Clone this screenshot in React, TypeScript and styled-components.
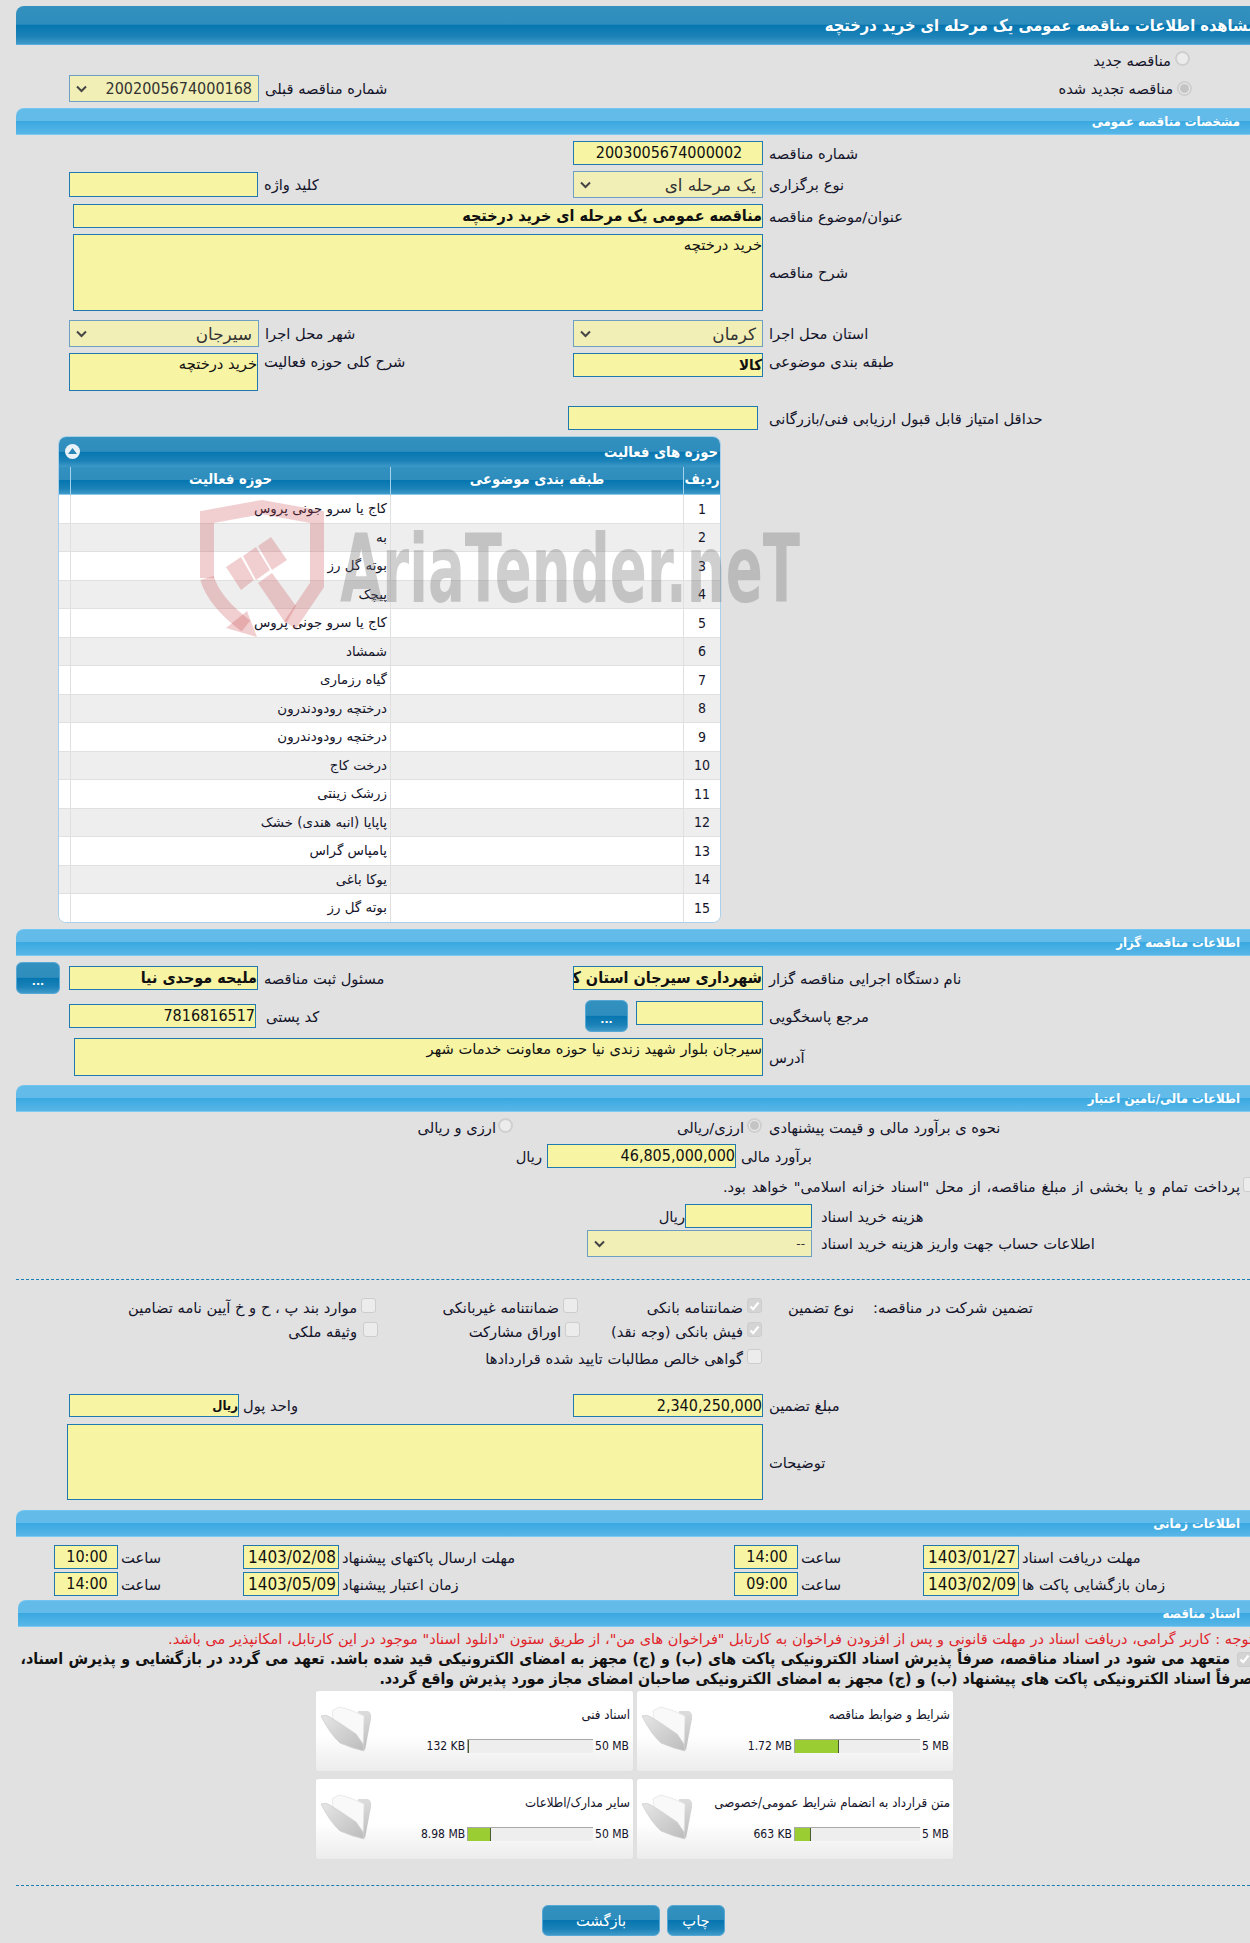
import React from 'react';
import styled, { createGlobalStyle } from 'styled-components';

const FONT = '"DejaVu Sans", sans-serif';
const NARROW = '"DejaVu Sans Condensed", "DejaVu Sans", sans-serif';
const BLUE_GRADIENT = 'linear-gradient(#3391c0 0, #2f8dbd 48%, #0676b0 50%, #1c82b8 80%, #3f9ac9 100%)';

const GlobalStyle = createGlobalStyle`
  html, body {
    margin: 0;
    background: #e1e1e1;
    font-family: ${FONT};
    font-size: 14.7px;
    color: #14142a;
  }
`;

const Page = styled.div`
  position: relative;
  width: 1234px;
  height: 1943px;
  padding-left: 16px;
  overflow: hidden;
`;

const MainTitle = styled.div`
  display: flex;
  justify-content: flex-start;
  align-items: center;
  height: 39px;
  margin-top: 6px;
  border-radius: 8px 0 0 0;
  background: ${BLUE_GRADIENT};
  box-sizing: border-box;
  border-bottom: 1px solid #56aede;
  color: #fff;
  font-family: ${NARROW};
  font-weight: bold;
  font-size: 16.3px;
  direction: rtl;
  white-space: nowrap;
  overflow: hidden;
`;

const TitleText = styled.span`
  margin-right: -7px;
`;

const Bar = styled.div<{ $top: number; $left?: number }>`
  display: flex;
  align-items: center;
  justify-content: flex-start;
  height: 27px;
  box-sizing: border-box;
  margin-top: ${(p) => p.$top}px;
  margin-left: ${(p) => p.$left || 0}px;
  padding: 0 10px 0 0;
  border-radius: 8px 0 0 0;
  border-top: 1px solid #72c5f0;
  border-bottom: 1px solid #7ccbf3;
  background: linear-gradient(#63bbe9 0, #63bbe9 48%, #3aa9e1 50%, #58b6e7 100%);
  color: #fff;
  font-family: ${NARROW};
  font-weight: bold;
  font-size: 13px;
  direction: rtl;
`;

const Row = styled.div<{ $top: number; $cols?: string; $pad?: number; $h?: number }>`
  display: grid;
  grid-template-columns: ${(p) => p.$cols || '504px 1fr'};
  padding-left: ${(p) => (p.$pad === undefined ? 53 : p.$pad)}px;
  margin-top: ${(p) => p.$top}px;
  ${(p) => (p.$h ? `height: ${p.$h}px;` : '')}
`;

const Group = styled.div<{ $end?: boolean; $gap?: number; $start?: boolean }>`
  display: flex;
  align-items: ${(p) => (p.$start ? 'flex-start' : 'center')};
  justify-content: ${(p) => (p.$end ? 'flex-end' : 'flex-start')};
  gap: ${(p) => (p.$gap === undefined ? 6 : p.$gap)}px;
`;

const Label = styled.span`
  direction: rtl;
  white-space: nowrap;
`;

// radio and checkbox captions sit a little lower than the box beside them
const BoxLabel = styled(Label)`
  margin-top: 4px;
`;

const TreasuryLabel = styled(BoxLabel)`
  word-spacing: 1.2px;
`;

const Control = styled.div<{ $w: number; $h?: number; $digits?: number; $bold?: boolean }>`
  flex: none;
  box-sizing: border-box;
  width: ${(p) => p.$w}px;
  height: ${(p) => p.$h || 24}px;
  line-height: ${(p) => (p.$h && p.$h > 30 ? '20px' : `${(p.$h || 24) - 2}px`)};
  padding: 0 0 0 2px;
  background: #f7f4a4;
  border: 1px solid #1f78ae;
  direction: rtl;
  text-align: right;
  white-space: nowrap;
  overflow: hidden;
  font-family: ${(p) => (p.$digits || p.$bold ? NARROW : FONT)};
  font-size: ${(p) => p.$digits || (p.$bold ? 16 : 14.7)}px;
  font-weight: ${(p) => (p.$bold ? 'bold' : 'normal')};
  color: #111;
`;

const Centered = styled.div`
  text-align: center;
  direction: ltr;
`;

const SelectBox = styled.div<{ $w: number }>`
  flex: none;
  display: flex;
  align-items: center;
  justify-content: space-between;
  box-sizing: border-box;
  width: ${(p) => p.$w}px;
  height: 27px;
  padding: 0 6px;
  background: #f1efb6;
  border: 1px solid #6c9fc2;
  color: #333;
  direction: ltr;
`;

const SelectText = styled.span<{ $digits?: boolean; $small?: boolean }>`
  direction: rtl;
  font-family: ${(p) => (p.$digits ? NARROW : FONT)};
  font-size: ${(p) => (p.$digits ? 16 : p.$small ? 12 : 16.8)}px;
`;

const Chevron = () => (
  <svg width="11" height="8" viewBox="0 0 11 8" fill="none">
    <path d="M1 1.5 L5.5 6 L10 1.5" stroke="#444" strokeWidth="2" />
  </svg>
);

function Select({ w, text, digits, small }: { w: number; text: string; digits?: boolean; small?: boolean }) {
  return (
    <SelectBox $w={w}>
      <Chevron />
      <SelectText $digits={digits} $small={small}>{text}</SelectText>
    </SelectBox>
  );
}

const Radio = styled.span<{ $on?: boolean }>`
  flex: none;
  display: inline-flex;
  align-items: center;
  justify-content: center;
  box-sizing: border-box;
  width: 15px;
  height: 15px;
  border-radius: 50%;
  background: #ececec;
  border: 2px solid #cfcfcf;
  &::after {
    content: '';
    width: 9px;
    height: 9px;
    border-radius: 50%;
    background: ${(p) => (p.$on ? '#c4c4c4' : 'transparent')};
  }
`;

const CheckBoxBase = styled.span<{ $on?: boolean }>`
  flex: none;
  display: inline-flex;
  align-items: center;
  justify-content: center;
  box-sizing: border-box;
  width: 15px;
  height: 15px;
  border-radius: 3px;
  background: ${(p) => (p.$on ? '#d4d4d4' : '#ececec')};
  border: 1px solid #cdcdcd;
`;

function CheckBox({ on }: { on?: boolean }) {
  return (
    <CheckBoxBase $on={on}>
      {on && (
        <svg width="11" height="10" viewBox="0 0 11 10" fill="none">
          <path d="M1.5 5.5 L4.2 8.2 L9.5 1.5" stroke="#fff" strokeWidth="2.2" />
        </svg>
      )}
    </CheckBoxBase>
  );
}

const RadioLine = styled.div<{ $top: number }>`
  display: flex;
  justify-content: flex-end;
  align-items: center;
  gap: 4px;
  height: 15px;
  margin-top: ${(p) => p.$top}px;
  padding-right: 60px;
`;

const DotsButton = styled.div<{ $wide?: number }>`
  flex: none;
  display: flex;
  align-items: flex-end;
  justify-content: center;
  box-sizing: border-box;
  width: ${(p) => p.$wide || 44}px;
  height: 32px;
  padding-bottom: 6px;
  border-radius: 6px;
  border: 1px solid #55a8d6;
  background: ${BLUE_GRADIENT};
  color: #fff;
  font-weight: bold;
  font-size: 11px;
  line-height: 11px;
`;

const ShiftedDots = styled(DotsButton)`
  margin: 0 2px 0 12px;
`;

const RaisedControl = styled(Control)`
  margin-top: -7px;
`;

const Panel = styled.div`
  width: 663px;
  height: 487px;
  margin: 6px 0 0 42px;
  box-sizing: border-box;
  border-radius: 8px;
  overflow: hidden;
  background: #fff;
  border: 1px solid #a9d0ea;
`;

const PanelHead = styled.div`
  display: flex;
  align-items: center;
  justify-content: space-between;
  box-sizing: border-box;
  height: 30px;
  padding: 0 2px 2px 6px;
  background: ${BLUE_GRADIENT};
  color: #fff;
  font-family: ${NARROW};
  font-weight: bold;
  font-size: 14.7px;
`;

const Collapse = styled.span`
  flex: none;
  display: flex;
  align-items: center;
  justify-content: center;
  width: 15px;
  height: 15px;
  border-radius: 50%;
  background: #e8f2f8;
`;

const ColumnGrid = styled.div`
  display: grid;
  grid-template-columns: 12px 320px 293px 1fr;
`;

const HeadRow = styled(ColumnGrid)`
  height: 28px;
  background: ${BLUE_GRADIENT};
  border-bottom: 1px solid #8ccaec;
  box-sizing: border-box;
  color: #fff;
  font-family: ${NARROW};
  font-weight: bold;
  font-size: 14.7px;
`;

const HeadCell = styled.div`
  display: flex;
  align-items: center;
  justify-content: center;
  padding-bottom: 4px;
  border-right: 1px solid #a5d3ee;
  direction: rtl;
  &:last-child {
    border-right: 0;
  }
`;

const DataRow = styled(ColumnGrid)<{ $odd: boolean }>`
  height: 28.5px;
  box-sizing: border-box;
  background: ${(p) => (p.$odd ? '#eeeeee' : '#ffffff')};
  border-bottom: 1px solid #e0e0e0;
  font-size: 13.4px;
`;

const DataCell = styled.div`
  display: flex;
  align-items: center;
  justify-content: flex-end;
  padding-right: 3px;
  direction: ltr;
  border-right: 1px solid #e0e0e0;
  white-space: nowrap;
`;

const NumCell = styled.div`
  display: flex;
  align-items: center;
  justify-content: center;
  font-family: ${NARROW};
  font-size: 14px;
`;

const Watermark = styled.svg`
  position: absolute;
  left: 190px;
  top: 495px;
  pointer-events: none;
`;

const Dashed = styled.div<{ $top: number }>`
  margin-top: ${(p) => p.$top}px;
  border-top: 1px dashed #1a7fb5;
`;

const Notice = styled.div`
  margin: 3px -3px 0 0;
  height: 19px;
  line-height: 18px;
  direction: rtl;
  white-space: nowrap;
  color: #e0242a;
  font-size: 14.5px;
`;

const Pledge = styled.div`
  direction: rtl;
  white-space: nowrap;
  font-family: ${NARROW};
  font-weight: bold;
  font-size: 15.8px;
  color: #111;
  line-height: 20px;
`;

const PledgeLine = styled.div<{ $right?: number; $spread?: number }>`
  display: flex;
  align-items: center;
  gap: 7px;
  margin-right: ${(p) => p.$right || 0}px;
  word-spacing: ${(p) => p.$spread || 0}px;
`;

const Cards = styled.div`
  display: grid;
  grid-template-columns: 317px 316px;
  grid-auto-rows: 80px;
  gap: 8px 4px;
  margin: 2px 0 0 300px;
`;

const Card = styled.div`
  display: flex;
  align-items: flex-start;
  box-sizing: border-box;
  padding: 15px 4px 0 4px;
  border-radius: 2px;
  background: linear-gradient(#ffffff 0, #ffffff 55%, #ececec 100%);
  box-shadow: 0 0 1px #cfcfcf;
`;

const CardBody = styled.div`
  flex: 1;
  display: flex;
  flex-direction: column;
`;

const CardTitle = styled.div`
  direction: rtl;
  white-space: nowrap;
  height: 14px;
  line-height: 14px;
  font-family: ${NARROW};
  font-size: 13.2px;
  margin: 2px -1px 17px 0;
`;

const Meter = styled.div`
  display: flex;
  align-items: center;
  justify-content: flex-end;
  gap: 2px;
  font-family: ${NARROW};
  font-size: 12px;
`;

const Track = styled.div`
  flex: none;
  width: 126px;
  height: 14px;
  box-sizing: border-box;
  background: #eeeeee;
  border-top: 1px solid #a8a8a8;
  border-left: 1px solid #a8a8a8;
`;

const Fill = styled.div`
  height: 100%;
  box-sizing: border-box;
  background: #9acd32;
  border-right: 1px solid #4a5a30;
`;

const Buttons = styled.div`
  display: flex;
  gap: 7px;
  margin: 19px 0 0 526px;
`;

const ActionButton = styled.div<{ $w: number }>`
  display: flex;
  align-items: center;
  justify-content: center;
  box-sizing: border-box;
  width: ${(p) => p.$w}px;
  height: 31px;
  border-radius: 6px;
  border: 1px solid #55a8d6;
  background: ${BLUE_GRADIENT};
  color: #fff;
  font-size: 14.7px;
  direction: rtl;
`;

const FolderIcon = styled.svg`
  flex: none;
`;

const Folder = ({ id }: { id: string }) => (
  <FolderIcon width="52" height="47" viewBox="0 0 52 47">
    <defs>
      <linearGradient id={`front-${id}`} x1="0" y1="0" x2="1" y2="1">
        <stop offset="0" stopColor="#e6e6e6" />
        <stop offset="1" stopColor="#bcbcbc" />
      </linearGradient>
      <linearGradient id={`back-${id}`} x1="0" y1="0" x2="0" y2="1">
        <stop offset="0" stopColor="#dcdcdc" />
        <stop offset="1" stopColor="#bdbdbd" />
      </linearGradient>
    </defs>
    <path d="M38 5 L48 5 Q52 7 51 13 L45 44 L40 40 Z" fill={`url(#back-${id})`} />
    <path d="M12 5 L19 1 Q30 3 44 10 L43 40 L36 29 L14 18 Z" fill="#f9f9f9" stroke="#e4e4e4" strokeWidth="0.8" />
    <path
      d="M1 10 Q6 8 10 11 L21 18 L36 28 L43 38 L44 45 L33 42 L20 37 Q10 28 1 10 Z"
      fill={`url(#front-${id})`}
      stroke="#cfcfcf"
      strokeWidth="0.8"
    />
  </FolderIcon>
);

const ACTIVITIES = [
  'کاج یا سرو جونی پروس',
  'به',
  'بوته گل رز',
  'پیچک',
  'کاج یا سرو جونی پروس',
  'شمشاد',
  'گیاه رزماری',
  'درختچه رودودندرون',
  'درختچه رودودندرون',
  'درخت کاج',
  'زرشک زینتی',
  'پاپایا (انبه هندی) خشک',
  'پامپاس گراس',
  'یوکا باغی',
  'بوته گل رز',
];

const DOCS = [
  { title: 'اسناد فنی', size: '132 KB', max: '50 MB', pct: 1 },
  { title: 'شرایط و ضوابط مناقصه', size: '1.72 MB', max: '5 MB', pct: 35 },
  { title: 'سایر مدارک/اطلاعات', size: '8.98 MB', max: '50 MB', pct: 18 },
  { title: 'متن قرارداد به انضمام شرایط عمومی/خصوصی', size: '663 KB', max: '5 MB', pct: 13 },
];

function App() {
  return (
    <Page>
      <GlobalStyle />
      <MainTitle>
        <TitleText>مشاهده اطلاعات مناقصه عمومی یک مرحله ای خرید درختچه</TitleText>
      </MainTitle>

      <RadioLine $top={6}>
        <BoxLabel>مناقصه جدید</BoxLabel>
        <Radio />
      </RadioLine>
      <Row $top={9} $cols="1fr auto" $h={27}>
        <Group>
          <Select w={190} text="2002005674000168" digits />
          <Label>شماره مناقصه قبلی</Label>
        </Group>
        <Group $gap={4}>
          <Label>مناقصه تجدید شده</Label>
          <Radio $on />
          <span style={{ width: 54 }} />
        </Group>
      </Row>

      <Bar $top={6}>مشخصات مناقصه عمومی</Bar>

      <Row $top={6}>
        <span />
        <Group>
          <Control $w={190} $digits={16}>
            <Centered>2003005674000002</Centered>
          </Control>
          <Label>شماره مناقصه</Label>
        </Group>
      </Row>
      <Row $top={6} $h={27}>
        <Group>
          <Control $w={189} $h={25} />
          <Label>کلید واژه</Label>
        </Group>
        <Group>
          <Select w={190} text="یک مرحله ای" />
          <Label>نوع برگزاری</Label>
        </Group>
      </Row>
      <Row $top={6} $pad={57} $cols="1fr">
        <Group>
          <Control $w={690} $bold>مناقصه عمومی یک مرحله ای خرید درختچه</Control>
          <Label>عنوان/موضوع مناقصه</Label>
        </Group>
      </Row>
      <Row $top={6} $pad={57} $cols="1fr">
        <Group>
          <Control $w={690} $h={77}>خرید درختچه</Control>
          <Label>شرح مناقصه</Label>
        </Group>
      </Row>
      <Row $top={9}>
        <Group>
          <Select w={190} text="سیرجان" />
          <Label>شهر محل اجرا</Label>
        </Group>
        <Group>
          <Select w={190} text="کرمان" />
          <Label>استان محل اجرا</Label>
        </Group>
      </Row>
      <Row $top={6} $h={38}>
        <Group $start>
          <Control $w={189} $h={38}>خرید درختچه</Control>
          <Label>شرح کلی حوزه فعالیت</Label>
        </Group>
        <Group $start>
          <Control $w={190} $digits={15} $bold>کالا</Control>
          <Label>طبقه بندی موضوعی</Label>
        </Group>
      </Row>
      <Row $top={15} $cols="499px 1fr">
        <span />
        <Group $gap={11}>
          <Control $w={190} />
          <Label>حداقل امتیاز قابل قبول ارزیابی فنی/بازرگانی</Label>
        </Group>
      </Row>

      <Panel>
        <PanelHead>
          <Collapse>
            <svg width="9" height="6" viewBox="0 0 9 6">
              <path d="M4.5 0 L9 6 L0 6 Z" fill="#2a86b8" />
            </svg>
          </Collapse>
          <Label>حوزه های فعالیت</Label>
        </PanelHead>
        <HeadRow>
          <HeadCell />
          <HeadCell>حوزه فعالیت</HeadCell>
          <HeadCell>طبقه بندی موضوعی</HeadCell>
          <HeadCell>ردیف</HeadCell>
        </HeadRow>
        {ACTIVITIES.map((name, i) => (
          <DataRow key={i} $odd={i % 2 === 1}>
            <DataCell />
            <DataCell>
              <Label>{name}</Label>
            </DataCell>
            <DataCell />
            <NumCell>{i + 1}</NumCell>
          </DataRow>
        ))}
      </Panel>

      <Watermark width="620" height="150" viewBox="190 495 620 150">
        <g fill="none" stroke="#c8474a" strokeOpacity="0.26" strokeWidth="14">
          <path d="M207 578 L207 517 L262 507 L317 517 L317 585 L290 625" />
          <path d="M207 578 Q214 602 246 626" />
        </g>
        <g fill="#c8474a" fillOpacity="0.26">
          <path d="M247 611 L257 637 L226 628 Z" />
          <path d="M226 567 L241 557 L254 580 L241 590 Z" />
          <path d="M243 556 L256 547 L270 570 L256 580 Z" />
          <path d="M258 546 L271 537 L287 560 L272 570 Z" />
          <path d="M258 583 L272 573 L296 606 L286 624 Z" />
        </g>
        <text
          x="340"
          y="602"
          fontFamily='"DejaVu Sans", sans-serif'
          fontWeight="bold"
          fontSize="94"
          textLength="460"
          lengthAdjust="spacingAndGlyphs"
          fill="#6e6e6e"
          fillOpacity="0.33"
        >
          AriaTender.neT
        </text>
      </Watermark>

      <Bar $top={6}>اطلاعات مناقصه گزار</Bar>

      <Row $top={6} $pad={0} $cols="557px 1fr" $h={32}>
        <Group $gap={9}>
          <DotsButton>...</DotsButton>
          <Group>
            <Control $w={189} $bold>ملیحه موحدی نیا</Control>
            <Label>مسئول ثبت مناقصه</Label>
          </Group>
        </Group>
        <Group>
          <Control $w={190} $bold>شهرداری سیرجان استان کرمان</Control>
          <Label>نام دستگاه اجرایی مناقصه گزار</Label>
        </Group>
      </Row>
      <Row $top={6} $h={32}>
        <Group $gap={10}>
          <Control $w={187} $digits={16}>7816816517</Control>
          <Label>کد پستی</Label>
        </Group>
        <Group>
          <ShiftedDots $wide={43}>...</ShiftedDots>
          <RaisedControl $w={127} />
          <Label>مرجع پاسخگویی</Label>
        </Group>
      </Row>
      <Row $top={6} $pad={58} $cols="1fr">
        <Group>
          <Control $w={689} $h={38}>سیرجان بلوار شهید زندی نیا حوزه معاونت خدمات شهر</Control>
          <Label>آدرس</Label>
        </Group>
      </Row>

      <Bar $top={9}>اطلاعات مالی/تامین اعتبار</Bar>

      <Row $top={3} $pad={0} $cols="497px 249px 1fr" $h={17}>
        <Group $end $gap={2}>
          <BoxLabel>ارزی و ریالی</BoxLabel>
          <Radio />
        </Group>
        <Group $end $gap={3}>
          <BoxLabel>ارزی/ریالی</BoxLabel>
          <Radio $on />
        </Group>
        <Group style={{ paddingLeft: 7 }}>
          <BoxLabel>نحوه ی برآورد مالی و قیمت پیشنهادی</BoxLabel>
        </Group>
      </Row>
      <Row $top={12} $pad={0} $cols="531px 1fr">
        <Group $end style={{ paddingRight: 5 }}>
          <Label>ریال</Label>
        </Group>
        <Group $gap={5}>
          <Control $w={189} $digits={16}>46,805,000,000</Control>
          <Label>برآورد مالی</Label>
        </Group>
      </Row>
      <Row $top={6} $pad={0} $cols="1fr" $h={15}>
        <Group $end $gap={3} style={{ marginRight: -8 }}>
          <TreasuryLabel>پرداخت تمام و یا بخشی از مبلغ مناقصه، از محل "اسناد خزانه اسلامی" خواهد بود.</TreasuryLabel>
          <CheckBox />
        </Group>
      </Row>
      <Row $top={15} $pad={0} $cols="669px 1fr">
        <Group $end>
          <Label>ریال</Label>
        </Group>
        <Group $gap={9}>
          <Control $w={127} />
          <Label>هزینه خرید اسناد</Label>
        </Group>
      </Row>
      <Row $top={2} $pad={0} $cols="571px 1fr">
        <span />
        <Group $gap={9}>
          <Select w={225} text="--" small />
          <Label>اطلاعات حساب جهت واریز هزینه خرید اسناد</Label>
        </Group>
      </Row>

      <Dashed $top={22} />

      <Row $top={15} $pad={0} $cols="360px 202px 184px 1fr" $h={15}>
        <Group $end $gap={4}>
          <BoxLabel>موارد بند پ ، ح و خ آیین نامه تضامین</BoxLabel>
          <CheckBox />
        </Group>
        <Group $end $gap={4}>
          <BoxLabel>ضمانتنامه غیربانکی</BoxLabel>
          <CheckBox />
        </Group>
        <Group $end $gap={4}>
          <BoxLabel>ضمانتنامه بانکی</BoxLabel>
          <CheckBox on />
        </Group>
        <Group $gap={19} style={{ paddingLeft: 26 }}>
          <BoxLabel>نوع تضمین</BoxLabel>
          <BoxLabel>تضمین شرکت در مناقصه:</BoxLabel>
        </Group>
      </Row>
      <Row $top={9} $pad={0} $cols="362px 202px 182px 1fr" $h={15}>
        <Group $end $gap={6}>
          <BoxLabel>وثیقه ملکی</BoxLabel>
          <CheckBox />
        </Group>
        <Group $end $gap={4}>
          <BoxLabel>اوراق مشارکت</BoxLabel>
          <CheckBox />
        </Group>
        <Group $end $gap={4}>
          <BoxLabel>فیش بانکی (وجه نقد)</BoxLabel>
          <CheckBox on />
        </Group>
      </Row>
      <Row $top={12} $pad={0} $cols="746px 1fr" $h={15}>
        <Group $end $gap={4}>
          <BoxLabel>گواهی خالص مطالبات تایید شده قراردادها</BoxLabel>
          <CheckBox />
        </Group>
      </Row>

      <Row $top={33}>
        <Group $gap={4}>
          <Control $w={170} $h={23} $digits={13} $bold>ریال</Control>
          <Label>واحد پول</Label>
        </Group>
        <Group>
          <Control $w={190} $h={23} $digits={16}>2,340,250,000</Control>
          <Label>مبلغ تضمین</Label>
        </Group>
      </Row>
      <Row $top={7} $pad={51} $cols="1fr">
        <Group>
          <Control $w={696} $h={76} />
          <Label>توضیحات</Label>
        </Group>
      </Row>

      <Bar $top={10}>اطلاعات زمانی</Bar>

      <Row $top={8} $pad={38} $cols="189px 491px 189px 1fr">
        <Group $gap={3}>
          <Control $w={64} $digits={16}>
            <Centered>10:00</Centered>
          </Control>
          <Label>ساعت</Label>
        </Group>
        <Group $gap={3}>
          <Control $w={96} $digits={17}>
            <Centered>1403/02/08</Centered>
          </Control>
          <Label>مهلت ارسال پاکتهای پیشنهاد</Label>
        </Group>
        <Group $gap={3}>
          <Control $w={64} $digits={16}>
            <Centered>14:00</Centered>
          </Control>
          <Label>ساعت</Label>
        </Group>
        <Group $gap={3}>
          <Control $w={96} $digits={17}>
            <Centered>1403/01/27</Centered>
          </Control>
          <Label>مهلت دریافت اسناد</Label>
        </Group>
      </Row>
      <Row $top={3} $pad={38} $cols="189px 491px 189px 1fr">
        <Group $gap={3}>
          <Control $w={64} $digits={16}>
            <Centered>14:00</Centered>
          </Control>
          <Label>ساعت</Label>
        </Group>
        <Group $gap={3}>
          <Control $w={96} $digits={17}>
            <Centered>1403/05/09</Centered>
          </Control>
          <Label>زمان اعتبار پیشنهاد</Label>
        </Group>
        <Group $gap={3}>
          <Control $w={64} $digits={16}>
            <Centered>09:00</Centered>
          </Control>
          <Label>ساعت</Label>
        </Group>
        <Group $gap={3}>
          <Control $w={96} $digits={17}>
            <Centered>1403/02/09</Centered>
          </Control>
          <Label>زمان بازگشایی پاکت ها</Label>
        </Group>
      </Row>

      <Bar $top={4} $left={2}>اسناد مناقصه</Bar>

      <Notice>
        توجه : کاربر گرامی، دریافت اسناد در مهلت قانونی و پس از افزودن فراخوان به کارتابل "فراخوان های من"، از طریق ستون "دانلود اسناد" موجود در این کارتابل، امکانپذیر می باشد.
      </Notice>
      <Pledge>
        <PledgeLine $right={-2} $spread={0.4}>
          <CheckBox on />
          <span>متعهد می شود در اسناد مناقصه، صرفاً پذیرش اسناد الکترونیکی پاکت های (ب) و (ج) مجهز به امضای الکترونیکی قید شده باشد. تعهد می گردد در بازگشایی و پذیرش اسناد،</span>
        </PledgeLine>
        <PledgeLine $right={-3}>
          <span>صرفاً اسناد الکترونیکی پاکت های پیشنهاد (ب) و (ج) مجهز به امضای الکترونیکی صاحبان امضای مجاز مورد پذیرش واقع گردد.</span>
        </PledgeLine>
      </Pledge>

      <Cards>
        {DOCS.map((d, i) => (
          <Card key={d.title}>
            <Folder id={String(i)} />
            <CardBody>
              <CardTitle>{d.title}</CardTitle>
              <Meter>
                <span>{d.size}</span>
                <Track>
                  <Fill style={{ width: `${d.pct}%` }} />
                </Track>
                <span>{d.max}</span>
              </Meter>
            </CardBody>
          </Card>
        ))}
      </Cards>

      <Dashed $top={26} />

      <Buttons>
        <ActionButton $w={118}>بازگشت</ActionButton>
        <ActionButton $w={58}>چاپ</ActionButton>
      </Buttons>
    </Page>
  );
}

export default App;
